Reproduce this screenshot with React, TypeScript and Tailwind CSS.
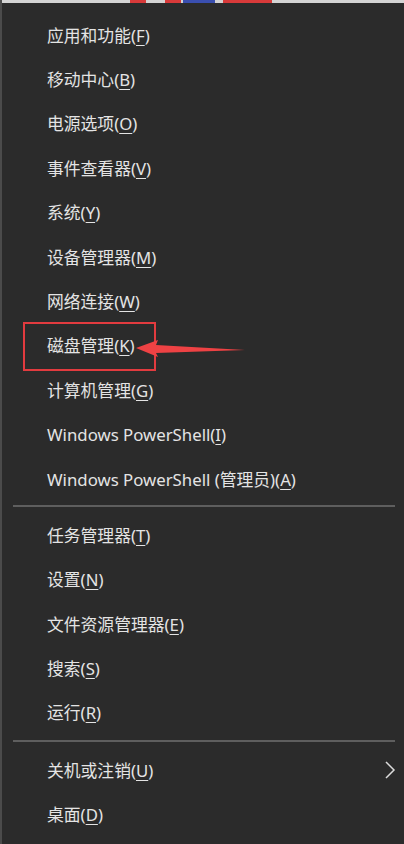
import React from "react";

type Item = { label: string; key: string; chevron?: boolean; marked?: boolean };

const sec1: Item[] = [
  { label: "应用和功能", key: "F" },
  { label: "移动中心", key: "B" },
  { label: "电源选项", key: "O" },
  { label: "事件查看器", key: "V" },
  { label: "系统", key: "Y" },
  { label: "设备管理器", key: "M" },
  { label: "网络连接", key: "W" },
  { label: "磁盘管理", key: "K", marked: true },
  { label: "计算机管理", key: "G" },
  { label: "Windows PowerShell", key: "I" },
  { label: "Windows PowerShell (管理员)", key: "A" },
];
const sec2: Item[] = [
  { label: "任务管理器", key: "T" },
  { label: "设置", key: "N" },
  { label: "文件资源管理器", key: "E" },
  { label: "搜索", key: "S" },
  { label: "运行", key: "R" },
];
const sec3: Item[] = [
  { label: "关机或注销", key: "U", chevron: true },
  { label: "桌面", key: "D" },
];

function Row({ item }: { item: Item }) {
  return (
    <div className="relative h-[44.4px] flex items-center pl-[45px] pr-[8px] text-[16.8px] text-[#e4e4e4]">
      <span className="flex-1 whitespace-nowrap">
        {item.label}(
        <span className="underline decoration-1 underline-offset-[3px]">{item.key}</span>)
      </span>
      {item.chevron && (
        <svg width="12" height="18" viewBox="0 0 12 18">
          <path d="M2 1 L10 9 L2 17" fill="none" stroke="#dcdcdc" strokeWidth="1.5" />
        </svg>
      )}
      {item.marked && (
        <>
          <div className="absolute left-[21px] -top-[2px] w-[133px] h-[49px] border-2 border-[#e23b3f]" />
          <svg className="absolute left-[130px] top-[12px]" width="120" height="24" viewBox="0 0 120 24">
            <polygon points="4,12 26,4 24,9 113,14 24,17 26,21" fill="#ee4244" />
          </svg>
        </>
      )}
    </div>
  );
}

export default function App() {
  return (
    <div
      className="w-[404px] h-[844px] overflow-hidden bg-[#2b2b2b] border-l-2 border-[#4b4b4b] flex flex-col"
      style={{ fontFamily: '"Noto Sans", "Noto Sans CJK SC", sans-serif' }}
    >
      <div className="h-[3px] bg-[#d4d4d4] flex">
        <div className="w-[128px]" />
        <div className="w-[16px] bg-[#d83a3a]" />
        <div className="w-[19px]" />
        <div className="w-[16px] bg-[#d83a3a]" />
        <div className="w-[2px]" />
        <div className="w-[32px] bg-[#3a4fb0]" />
        <div className="w-[8px]" />
        <div className="w-[49px] bg-[#d83a3a]" />
      </div>
      <div className="pt-[10px] flex flex-col">
        {sec1.map((it) => (
          <Row key={it.key} item={it} />
        ))}
        <div className="mt-[4px] mb-[6px] ml-[11px] mr-[9px] h-[2px] bg-[#5e5e5e]" />
        {sec2.map((it) => (
          <Row key={it.key} item={it} />
        ))}
        <div className="mt-[5px] mb-[6px] ml-[11px] mr-[9px] h-[2px] bg-[#5e5e5e]" />
        {sec3.map((it) => (
          <Row key={it.key} item={it} />
        ))}
      </div>
    </div>
  );
}
